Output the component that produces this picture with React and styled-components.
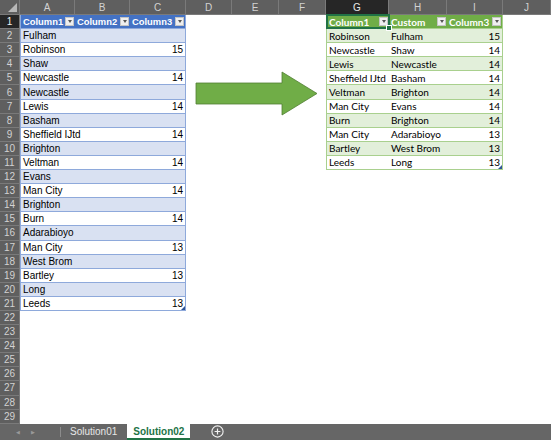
import { styled, createGlobalStyle, css } from "styled-components";

const GlobalStyle = createGlobalStyle`
  html, body { margin: 0; padding: 0; background: #fff; }
  body { width: 551px; height: 440px; overflow: hidden; }
  #root { height: 100%; }
`;

const COLS = ["A", "B", "C", "D", "E", "F", "G", "H", "I", "J"];
const WIDTHS = "20px 55px 55px 56px 46px 47px 47px 63px 58px 56px 1fr";

const LEFT = [
  ["Fulham"], ["Robinson", 15], ["Shaw"], ["Newcastle", 14], ["Newcastle"],
  ["Lewis", 14], ["Basham"], ["Sheffield IJtd", 14], ["Brighton"], ["Veltman", 14],
  ["Evans"], ["Man City", 14], ["Brighton"], ["Burn", 14], ["Adarabioyo"],
  ["Man City", 13], ["West Brom"], ["Bartley", 13], ["Long"], ["Leeds", 13],
];

const RIGHT = [
  ["Robinson", "Fulham", 15], ["Newcastle", "Shaw", 14], ["Lewis", "Newcastle", 14],
  ["Sheffield IJtd", "Basham", 14], ["Veltman", "Brighton", 14], ["Man City", "Evans", 14],
  ["Burn", "Brighton", 14], ["Man City", "Adarabioyo", 13], ["Bartley", "West Brom", 13],
  ["Leeds", "Long", 13],
];

const Frame = styled.div`
  height: 100%;
  display: flex;
  flex-direction: column;
  background: #fff;
`;

const Grid = styled.div`
  position: relative;
  display: grid;
  grid-template-columns: ${WIDTHS};
  grid-template-rows: 15px;
  grid-auto-rows: 14.1px;
`;

const Corner = styled.div`
  position: relative;
  background: #5f5f5f;
  border-right: 1px solid #7a7a7a;
  border-bottom: 1px solid #7a7a7a;
  &::after {
    content: "";
    position: absolute;
    right: 2px;
    bottom: 2px;
    border-left: 9px solid transparent;
    border-bottom: 9px solid #b8b8b8;
  }
`;

const ColHead = styled.div`
  background: ${(p) => (p.$active ? "#262626" : "#5f5f5f")};
  color: ${(p) => (p.$active ? "#e8e8e8" : "#d2d2d2")};
  border-right: 1px solid #7a7a7a;
  border-bottom: 1px solid ${(p) => (p.$active ? "#2a2a2a" : "#7a7a7a")};
  font: 10px "Liberation Sans", Arial, sans-serif;
  display: flex;
  align-items: center;
  justify-content: center;
  box-sizing: border-box;
`;

const RowHead = styled.div`
  background: ${(p) => (p.$active ? "#262626" : "#5f5f5f")};
  color: ${(p) => (p.$active ? "#f0f0f0" : "#d2d2d2")};
  border-bottom: 1px solid #7a7a7a;
  border-right: 1px solid #7a7a7a;
  font: 10px "Liberation Sans", Arial, sans-serif;
  display: flex;
  align-items: center;
  justify-content: center;
  box-sizing: border-box;
`;

const themes = {
  blue: { head: "#4472c4", band: "#d9e1f2", line: "#8ea9db", font: '"Liberation Sans", Arial, sans-serif', size: "10px", headSize: "9.4px" },
  green: { head: "#70ad47", band: "#e2efda", line: "#a9d08e", font: 'Lato, "Open Sans", sans-serif', size: "10px", headSize: "10px" },
};

const Cell = styled.div`
  position: relative;
  box-sizing: border-box;
  display: flex;
  align-items: center;
  justify-content: ${(p) => (p.$num ? "flex-end" : "space-between")};
  padding: 0 ${(p) => (p.$head ? "1px" : "2px")} 0 2px;
  white-space: nowrap;
  color: #000;
  min-width: 0;
  ${(p) => {
    const t = themes[p.$theme];
    if (!t) return "";
    return css`
      font-family: ${t.font};
      font-size: ${p.$head ? t.headSize : t.size};
      background: ${p.$head ? t.head : p.$band ? t.band : "#fff"};
      border-bottom: 1px solid ${t.line};
      ${p.$head && css`color: #fff; font-weight: bold;`}
      ${p.$first && css`border-left: 1px solid ${t.line};`}
      ${p.$last && css`border-right: 1px solid ${t.line};`}
    `;
  }}
  ${(p) => p.$selected && css`
    &::before {
      content: "";
      position: absolute;
      inset: -1px -1px -1px -1px;
      border: 2px solid #217346;
      z-index: 2;
    }
    &::after {
      content: "";
      position: absolute;
      right: -3px;
      bottom: -3px;
      width: 4px;
      height: 4px;
      background: #217346;
      border: 1px solid #fff;
      z-index: 3;
    }
  `}
`;

const Handle = styled.span`
  position: absolute;
  right: 0;
  bottom: 0;
  border-left: 4px solid transparent;
  border-bottom: 4px solid #2f5597;
`;

const Drop = styled.span`
  flex: none;
  width: 9px;
  height: 9px;
  box-sizing: border-box;
  background: #efefef;
  border: 1px solid #c4c4c4;
  display: flex;
  align-items: center;
  justify-content: center;
  &::after {
    content: "";
    border-left: 2.5px solid transparent;
    border-right: 2.5px solid transparent;
    border-top: 3px solid #555;
  }
`;

const Label = styled.span`
  position: relative;
  z-index: 1;
`;

const ArrowLayer = styled.svg`
  position: absolute;
  left: 195px;
  top: 71px;
  width: 124px;
  height: 46px;
  overflow: visible;
`;

const TabBar = styled.div`
  flex: 1;
  display: flex;
  align-items: stretch;
  background: #666666;
  font: 10px "Liberation Sans", Arial, sans-serif;
`;

const Nav = styled.div`
  display: flex;
  align-items: center;
  gap: 11px;
  padding-left: 16px;
  width: 44px;
  color: #9a9a9a;
  font-size: 5px;
  border-right: 1px solid #8c8c8c;
  margin: 3px 0;
`;

const Tab = styled.div`
  display: flex;
  align-items: center;
  ${(p) =>
    p.$active
      ? css`
          padding: 1px 6px 0;
          background: #fff;
          color: #217346;
          font-weight: bold;
          border-bottom: 2px solid #217346;
        `
      : css`
          padding: 0 10px 0 9px;
          color: #e6e6e6;
        `}
`;

const AddSheet = styled.div`
  display: flex;
  align-items: center;
  margin-left: 21px;
`;

const Arrow = () => (
  <ArrowLayer viewBox="0 0 124 46">
    <polygon
      points="1,12 87,12 87,1 122,22.5 87,44 87,33 1,33"
      fill="#70ad47"
      stroke="#507e32"
      strokeWidth="0.8"
    />
  </ArrowLayer>
);

function leftCell(r, c) {
  if (c > 2 || r > 21) return null;
  const base = { $theme: "blue", $first: c === 0, $last: c === 2 };
  if (r === 1) return { ...base, $head: true, text: `Column${c + 1}`, drop: true };
  const [name, num] = LEFT[r - 2];
  const props = { ...base, $band: r % 2 === 0 };
  if (c === 0) return { ...props, text: name };
  if (c === 2) return { ...props, $num: true, text: num, handle: r === 21 };
  return props;
}

function rightCell(r, c) {
  if (c < 6 || c > 8 || r > 11) return null;
  const k = c - 6;
  const base = { $theme: "green", $first: k === 0, $last: k === 2 };
  if (r === 1)
    return { ...base, $head: true, text: ["Column1", "Custom", "Column3"][k], drop: true, $selected: k === 0 };
  const row = RIGHT[r - 2];
  return { ...base, $band: r % 2 === 0, $num: k === 2, text: row[k], handle: r === 11 && k === 2 };
}

const Sheet = () => {
  const rows = [];
  for (let r = 1; r <= 29; r++) {
    rows.push(<RowHead key={`h${r}`} $active={r === 1}>{r}</RowHead>);
    for (let c = 0; c < 10; c++) {
      const info = leftCell(r, c) || rightCell(r, c) || {};
      const { text, drop, handle, ...rest } = info;
      rows.push(
        <Cell key={`${r}-${c}`} {...rest}>
          {text !== undefined && <Label>{text}</Label>}
          {drop && <Drop />}
          {handle && <Handle />}
        </Cell>
      );
    }
  }
  return (
    <Grid>
      <Corner />
      {COLS.map((l) => (
        <ColHead key={l} $active={l === "G"}>{l}</ColHead>
      ))}
      {rows}
      <Arrow />
    </Grid>
  );
};

const App = () => (
  <Frame>
    <GlobalStyle />
    <Sheet />
    <TabBar>
      <Nav>
        <span>◀</span>
        <span>▶</span>
      </Nav>
      <Tab>Solution01</Tab>
      <Tab $active>Solution02</Tab>
      <AddSheet>
        <svg width="13" height="13" viewBox="0 0 13 13">
          <circle cx="6.5" cy="6.5" r="5.6" fill="none" stroke="#f2f2f2" strokeWidth="1.1" />
          <path d="M6.5 3.6v5.8M3.6 6.5h5.8" stroke="#f2f2f2" strokeWidth="1.2" />
        </svg>
      </AddSheet>
    </TabBar>
  </Frame>
);

export default App;
